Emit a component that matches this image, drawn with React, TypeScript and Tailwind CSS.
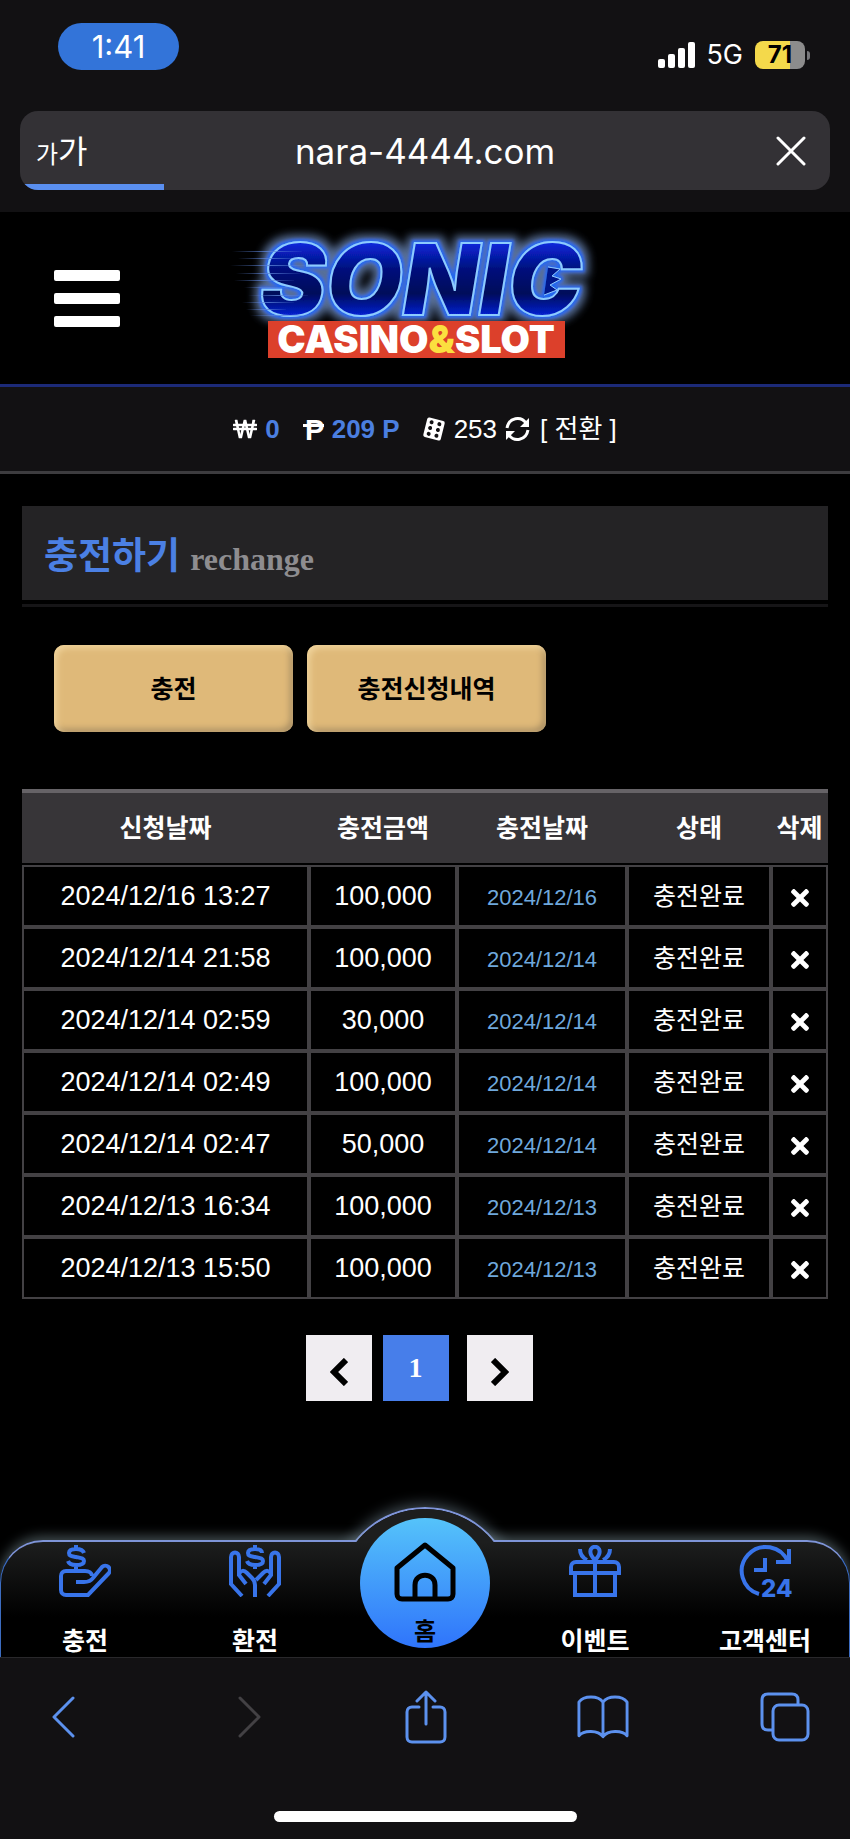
import React, { useState } from "react";
import { FaTimes, FaWonSign } from "react-icons/fa";

interface ChargeRow {
  requested: string;
  amount: string;
  charged: string;
  status: string;
}

const INITIAL_ROWS: ChargeRow[] = [
  { requested: "2024/12/16 13:27", amount: "100,000", charged: "2024/12/16", status: "충전완료" },
  { requested: "2024/12/14 21:58", amount: "100,000", charged: "2024/12/14", status: "충전완료" },
  { requested: "2024/12/14 02:59", amount: "30,000", charged: "2024/12/14", status: "충전완료" },
  { requested: "2024/12/14 02:49", amount: "100,000", charged: "2024/12/14", status: "충전완료" },
  { requested: "2024/12/14 02:47", amount: "50,000", charged: "2024/12/14", status: "충전완료" },
  { requested: "2024/12/13 16:34", amount: "100,000", charged: "2024/12/13", status: "충전완료" },
  { requested: "2024/12/13 15:50", amount: "100,000", charged: "2024/12/13", status: "충전완료" },
];

function StatusBar() {
  return (
    <div className="flex items-start justify-between pl-[58px] pr-10 pt-[23px] h-[111px] font-['Inter',sans-serif]">
      <div className="w-[121px] h-[47px] rounded-full bg-[#3374d9] text-white text-[31px] leading-[47px] text-center">
        1:41
      </div>
      <div className="flex items-center mt-4 h-8 text-white">
        <svg width="37" height="26" viewBox="0 0 37 26" fill="currentColor">
          <rect x="0" y="17" width="7" height="9" rx="2" />
          <rect x="10" y="12" width="7" height="14" rx="2" />
          <rect x="20" y="6" width="7" height="20" rx="2" />
          <rect x="30" y="0" width="7" height="26" rx="2" />
        </svg>
        <span className="ml-[11px] text-[27px] leading-8">5G</span>
        {/* Battery, 71% filled */}
        <div className="ml-3 w-[50px] h-7 rounded-lg bg-[linear-gradient(90deg,#f4d94b_71%,#8c8c8c_71%)] text-black text-2xl leading-7 font-bold text-center">
          71
        </div>
        <div className="ml-[2px] w-[3px] h-[9px] rounded-r-full bg-[#77777a]" />
      </div>
    </div>
  );
}

function AddressBar() {
  return (
    <div className="relative mx-5 mb-[22px] h-[79px] rounded-[18px] bg-[#333135] overflow-hidden flex items-center text-white">
      <button aria-label="글자 크기" className="w-20 pl-4 pb-1 h-full text-left whitespace-nowrap font-['Noto_Sans_CJK_KR',sans-serif]">
        <span className="text-[24px]">가</span>
        <span className="text-[32px]">가</span>
      </button>
      <input
        aria-label="주소"
        defaultValue="nara-4444.com"
        className="flex-1 min-w-0 h-full bg-transparent text-center text-[35px] outline-none font-['Inter',sans-serif]"
      />
      <button aria-label="중지" className="w-20 h-full flex items-center justify-end pr-6">
        <svg width="30" height="30" viewBox="0 0 30 30" stroke="currentColor" strokeWidth="3" strokeLinecap="round">
          <path d="M2 2l26 26M28 2L2 28" />
        </svg>
      </button>
      <div className="absolute left-0 bottom-0 h-[6px] w-36 bg-[#5a8ff0]" />
    </div>
  );
}

function Logo() {
  const streaks = [
    [12, 26, 70],
    [18, 33, 60],
    [10, 40, 80],
    [16, 48, 64],
    [14, 55, 60],
    [24, 62, 50],
    [28, 70, 60],
    [22, 77, 52],
    [26, 84, 40],
    [30, 90, 60],
  ];
  return (
    <svg className="overflow-visible" width="400" height="150" viewBox="5 0 400 150" role="img" aria-label="SONIC CASINO&SLOT">
      <defs>
        <linearGradient id="sonicFill" x1="0" y1="0" x2="0" y2="1">
          <stop offset="0.15" stopColor="#0b2cf0" />
          <stop offset="0.42" stopColor="#03107c" />
          <stop offset="0.62" stopColor="#020a5a" />
          <stop offset="0.85" stopColor="#0828f0" />
        </linearGradient>
        <filter id="sonicGlow" filterUnits="userSpaceOnUse" x="5" y="0" width="400" height="120">
          <feMorphology in="SourceAlpha" operator="dilate" radius="6" result="wide" />
          <feGaussianBlur in="wide" stdDeviation="4" result="soft" />
          <feFlood floodColor="#587099" />
          <feComposite in2="soft" operator="in" result="halo" />
          <feMorphology in="SourceAlpha" operator="dilate" radius="2" result="near" />
          <feGaussianBlur in="near" stdDeviation="1.500" result="nearSoft" />
          <feFlood floodColor="#2468ee" />
          <feComposite in2="nearSoft" operator="in" result="rim" />
          <feMerge>
            <feMergeNode in="halo" />
            <feMergeNode in="rim" />
            <feMergeNode in="SourceGraphic" />
          </feMerge>
        </filter>
        <linearGradient id="streak">
          <stop offset="0" stopColor="#5b82d8" stopOpacity="0" />
          <stop offset="0.5" stopColor="#5b82d8" stopOpacity="0.8" />
          <stop offset="1" stopColor="#5b82d8" stopOpacity="0.1" />
        </linearGradient>
      </defs>
      <g filter="url(#sonicGlow)">
        <text x="40" y="90" fontFamily="Inter, sans-serif" fontWeight="900" fontStyle="italic" fontSize="99" fill="url(#sonicFill)" stroke="#8ccbff" strokeWidth="2">
          SONIC
        </text>
        {/* Spiked inner edge of the last letter */}
        <path d="M328 42l12 2-8 7 9 3-11 6 7 5-13 5" fill="#04128a" stroke="#8ccbff" strokeWidth="1" />
      </g>
      {streaks.map(([x, y, w]) => (
        <rect key={y} x={x} y={y} width={w} height="1" fill="url(#streak)" />
      ))}
      <rect x="48" y="96" width="297" height="37" fill="#dc402b" />
      <text x="196" y="128" textAnchor="middle" fontFamily="Inter, sans-serif" fontWeight="900" fontSize="38" fill="#fff">
        CASINO<tspan fill="#fbdf3f">&amp;</tspan>SLOT
      </text>
    </svg>
  );
}

function SiteHeader() {
  return (
    <header className="grid grid-cols-[1fr_auto_1fr] h-[175px] border-b-[3px] border-[#1c2a78]">
      <button aria-label="메뉴" className="ml-[54px] mt-[58px] w-[66px] h-[57px] flex flex-col justify-between">
        <span className="block w-full h-[11px] rounded-xs bg-white" />
        <span className="block w-full h-[11px] rounded-xs bg-white" />
        <span className="block w-full h-[11px] rounded-xs bg-white" />
      </button>
      <a href="#" className="mt-[13px]">
        <Logo />
      </a>
      <div />
    </header>
  );
}

function BalanceBar() {
  return (
    <div className="flex items-center justify-center h-[87px] bg-[#121113] border-b-[3px] border-[#3d3c3f] text-[26px] leading-8 text-white whitespace-nowrap">
      <FaWonSign className="w-6 h-6" />
      <b className="ml-2 text-[#4b7fe0]">0</b>
      <svg className="ml-6 overflow-visible" width="20" height="24" viewBox="0 0 20 24" fill="currentColor">
        <text x="1" y="23" fontFamily="Liberation Sans, sans-serif" fontWeight="700" fontSize="29">P</text>
        <rect x="-1" y="7" width="21" height="3" />
      </svg>
      <b className="ml-2 text-[#4b7fe0]">209 P</b>
      <svg className="ml-[22px]" width="24" height="24" viewBox="0 0 24 24">
        <g transform="rotate(14 12 12)">
          <rect x="3" y="2" width="18" height="20" rx="2" fill="#fff" />
          {[6, 12, 18].map((cy) => (
            <g key={cy} fill="#121113">
              <circle cx="8" cy={cy} r="2" />
              <circle cx="16" cy={cy} r="2" />
            </g>
          ))}
        </g>
      </svg>
      <span className="ml-2">253</span>
      <button className="ml-2 flex items-center">
        <svg width="25" height="24" viewBox="0 0 25 24" fill="none" stroke="currentColor" strokeWidth="3">
          <path d="M2 11C4 0 16-1 21 6M23 13C21 24 9 25 4 18" />
          <path d="M24 1v9h-9zM1 23v-9h9z" fill="currentColor" stroke="none" />
        </svg>
        <span className="ml-[10px]">[ 전환 ]</span>
      </button>
    </div>
  );
}

interface HistoryTableProps {
  rows: ChargeRow[];
  onDelete: (index: number) => void;
}

function HistoryTable({ rows, onDelete }: HistoryTableProps) {
  const th = "border-t-4 border-b-2 border-t-[#666367] border-b-black bg-[#373538] bg-clip-padding font-bold";
  const td = "border-2 border-[#434144] p-0";
  return (
    <table className="mt-[57px] w-full table-fixed border-separate border-spacing-0 text-center text-white">
      <thead>
        <tr className="h-[76px] text-[25px] leading-8">
          <th className={`${th} w-[287px]`}>신청날짜</th>
          <th className={`${th} w-[148px]`}>충전금액</th>
          <th className={`${th} w-[170px]`}>충전날짜</th>
          <th className={`${th} w-[144px]`}>상태</th>
          <th className={th}>삭제</th>
        </tr>
      </thead>
      <tbody>
        {rows.map((row, i) => (
          <tr key={row.requested} className="h-[62px] text-[27px] leading-8">
            <td className={td}>{row.requested}</td>
            <td className={td}>{row.amount}</td>
            <td className={`${td} pt-1 text-[22px] text-[#6fa8dc]`}>{row.charged}</td>
            <td className={`${td} text-[25px]`}>{row.status}</td>
            <td className={`${td} pt-1`}>
              <button aria-label="삭제" className="block mx-auto" onClick={() => onDelete(i)}>
                <FaTimes className="w-[26px] h-[26px]" />
              </button>
            </td>
          </tr>
        ))}
      </tbody>
    </table>
  );
}

function Pagination() {
  return (
    <nav aria-label="페이지" className="mt-9 mr-3 flex justify-center">
      <button aria-label="이전" className="w-[66px] h-[66px] bg-[#f0edf1] flex items-center justify-center pt-2">
        <svg width="18" height="28" viewBox="0 0 18 28" fill="none" stroke="#000" strokeWidth="6">
          <path d="M16 2L4 14l12 12" />
        </svg>
      </button>
      <button className="ml-[11px] w-[66px] h-[66px] bg-[#477eea] text-white text-[28px] leading-8 font-bold font-['Liberation_Serif',serif]">
        1
      </button>
      <button aria-label="다음" className="ml-[18px] w-[66px] h-[66px] bg-[#f0edf1] flex items-center justify-center pt-2">
        <svg width="18" height="28" viewBox="0 0 18 28" fill="none" stroke="#000" strokeWidth="6">
          <path d="M2 2l12 12L2 26" />
        </svg>
      </button>
    </nav>
  );
}

function ChargeIcon() {
  return (
    <svg width="52" height="52" viewBox="0 0 52 52" fill="none" stroke="#3874ea" strokeWidth="4">
      <path d="M25 8C24 5 21 4 17 4c-4 0-7 1-7 4s2 3 7 4 8 1 8 4-3 4-8 4-7-1-8-4M17 0v4M17 20v5" />
      <path d="M17 37h8c5 0 7-1 9-4l9-11a4.500 4.500 0 0 1 6.500 6.500L29 50H7c-3 0-5-2-5-5V31c0-3 2-5 5-5h19c4 0 7 2 7 5" />
    </svg>
  );
}

function WithdrawIcon() {
  return (
    <svg width="52" height="52" viewBox="0 0 52 52" fill="none" stroke="#3874ea" strokeWidth="4">
      <path d="M33 8C33 5 30 4 26 4c-4 0-7 1-7 4s2 3 7 4 8 1 8 4-3 4-8 4-7-1-8-4M26 0v4M26 20v4" />
      <path d="M13 51L2 39V12c0-6 8-6 8 0v18l7 9M10 29c2-4 5-4 8-1l5 5c2 2 3 3 3 7v12" />
      <path d="M39 51l11-12V12c0-6-8-6-8 0v18l-7 9M42 29c-2-4-5-4-8-1l-7 7" />
    </svg>
  );
}

function HomeIcon() {
  return (
    <svg width="62" height="60" viewBox="0 0 62 60" fill="none" stroke="#000" strokeWidth="5" strokeLinejoin="round">
      <path d="M31 3L3 26v26c0 3 2 5 5 5h46c3 0 5-2 5-5V26z" />
      <path d="M21 57V43c0-13 20-13 20 0v14" />
    </svg>
  );
}

function GiftIcon() {
  return (
    <svg width="52" height="52" viewBox="0 0 52 52" fill="none" stroke="#3874ea" strokeWidth="4">
      <path d="M6 29v21h40V29M26 15v35M2 28v-6c0-3 2-5 5-5h38c3 0 5 2 5 5v6z" />
      <path d="M26 15c-4-4-6-7-4-11 2-3 6-3 8 0 2 4 0 7-4 11zM11 4c0 6 3 9 7 11M41 4c0 6-3 9-7 11" />
    </svg>
  );
}

function SupportIcon() {
  return (
    <svg className="overflow-visible" width="52" height="52" viewBox="0 0 52 52" fill="none" stroke="#3874ea" strokeWidth="4">
      <path d="M20 49A24 24 0 1 1 49 17M50 4v13H37M26 13v12H15" />
      <text x="22" y="52" fill="#3874ea" stroke="none" fontFamily="Inter, sans-serif" fontWeight="800" fontSize="24">24</text>
    </svg>
  );
}

function BottomMenu() {
  const item = "flex flex-col items-center justify-between pt-[5px] h-full";
  return (
    <nav aria-label="메뉴" className="relative h-[117px]">
      {/* Bump behind the home button */}
      <div className="absolute left-1/2 -top-[33px] -ml-[90px] w-[180px] h-[180px] rounded-full border-2 border-[#7f95d8] shadow-[0_0_14px_3px_rgba(140,165,180,0.45)]" />
      <div className="absolute inset-0 rounded-t-[43px] border-t-2 border-x border-t-[#7f95d8] border-x-[#3c6cc0] bg-[linear-gradient(#1d1e1e,#000_65%)] shadow-[0_-3px_12px_1px_rgba(140,165,170,0.45)]" />
      <div className="absolute left-1/2 -top-[31px] -ml-[88px] w-[176px] h-[34px] overflow-hidden">
        <div className="w-[176px] h-[176px] rounded-full bg-[#1d1e1e]" />
      </div>
      <ul className="relative grid grid-cols-5 h-full text-[25px] leading-8 font-bold text-white">
        <li>
          <a href="#" className={item}>
            <ChargeIcon />
            충전
          </a>
        </li>
        <li>
          <a href="#" className={item}>
            <WithdrawIcon />
            환전
          </a>
        </li>
        <li className="relative">
          <a
            href="#"
            className="absolute left-1/2 -top-[22px] -ml-[65px] w-[130px] h-[130px] rounded-full bg-[linear-gradient(#55c3fa,#2f74fb)] flex flex-col items-center justify-between pt-6 text-2xl leading-8 text-black"
          >
            <HomeIcon />
            홈
          </a>
        </li>
        <li>
          <a href="#" className={item}>
            <GiftIcon />
            이벤트
          </a>
        </li>
        <li>
          <a href="#" className={item}>
            <SupportIcon />
            고객센터
          </a>
        </li>
      </ul>
    </nav>
  );
}

// Positioned so that it covers the lower half of the bump above
function BrowserToolbar() {
  return (
    <div className="relative h-[182px] bg-[#121113] border-t border-[#29282b]">
      <div className="flex items-center justify-between pl-[51px] pr-10 h-[118px] text-[#5c91ee]">
        <button aria-label="뒤로">
          <svg width="24" height="42" viewBox="0 0 24 42" fill="none" stroke="currentColor" strokeWidth="3" strokeLinecap="round" strokeLinejoin="round">
            <path d="M22 2L3 21l19 19" />
          </svg>
        </button>
        <button aria-label="앞으로" className="ml-8 text-[#434144]">
          <svg width="24" height="42" viewBox="0 0 24 42" fill="none" stroke="currentColor" strokeWidth="3" strokeLinecap="round" strokeLinejoin="round">
            <path d="M2 2l19 19L2 40" />
          </svg>
        </button>
        <button aria-label="공유" className="ml-3">
          <svg width="42" height="54" viewBox="0 0 42 54" fill="none" stroke="currentColor" strokeWidth="3" strokeLinecap="round" strokeLinejoin="round">
            <path d="M14 17H7c-3 0-5 2-5 5v25c0 3 2 5 5 5h28c3 0 5-2 5-5V22c0-3-2-5-5-5h-7M21 34V2M12 11l9-9 9 9" />
          </svg>
        </button>
        <button aria-label="책갈피">
          <svg width="52" height="44" viewBox="0 0 54 45" fill="none" stroke="currentColor" strokeWidth="3" strokeLinejoin="round">
            <path d="M27 7C22 0 7 0 2 7v35c5-6 20-6 25 1 5-7 20-7 25-1V7C47 0 32 0 27 7v36" />
          </svg>
        </button>
        <button aria-label="탭">
          <svg width="50" height="50" viewBox="0 0 50 50" fill="none" stroke="currentColor" strokeWidth="3">
            <path d="M12 38H8c-4 0-6-2-6-6V8c0-4 2-6 6-6h24c4 0 6 2 6 6v4" />
            <rect x="13" y="13" width="35" height="35" rx="6" />
          </svg>
        </button>
      </div>
      <div className="mx-auto mt-[35px] w-[303px] h-[11px] rounded-full bg-white" />
    </div>
  );
}

export default function App() {
  const [rows, setRows] = useState(INITIAL_ROWS);

  const handleDelete = (index: number) => {
    setRows(rows.filter((_, i) => i !== index));
  };

  const tab =
    "w-[239px] h-[87px] rounded-[10px] bg-[#dfb979] text-[25px] leading-8 font-bold text-black cursor-pointer shadow-[inset_3px_3px_6px_#f0d49c,inset_-3px_-3px_6px_#a98e63]";

  return (
    <div className="min-h-screen flex flex-col bg-black font-['Liberation_Sans','Noto_Sans_CJK_KR',sans-serif]">
      <div className="bg-[#121113]">
        <StatusBar />
        <AddressBar />
      </div>
      <SiteHeader />
      <BalanceBar />
      <main className="flex-1 px-[22px] pt-8">
        <h1 className="flex items-center h-[94px] bg-[#242325] pl-[22px] pt-2 font-bold">
          <span className="text-[37px] leading-[48px] text-[#4b80e4]">충전하기</span>
          <span className="ml-[10px] mt-1 text-[32px] leading-10 text-[#8e8d90] font-['Liberation_Serif',serif]">rechange</span>
        </h1>
        <div className="mt-1 h-[3px] bg-[#161517]" />
        <div className="mt-[38px] ml-8 flex gap-[14px]">
          <button className={tab}>충전</button>
          <button className={tab}>충전신청내역</button>
        </div>
        <HistoryTable rows={rows} onDelete={handleDelete} />
        <Pagination />
      </main>
      <BottomMenu />
      <BrowserToolbar />
    </div>
  );
}
